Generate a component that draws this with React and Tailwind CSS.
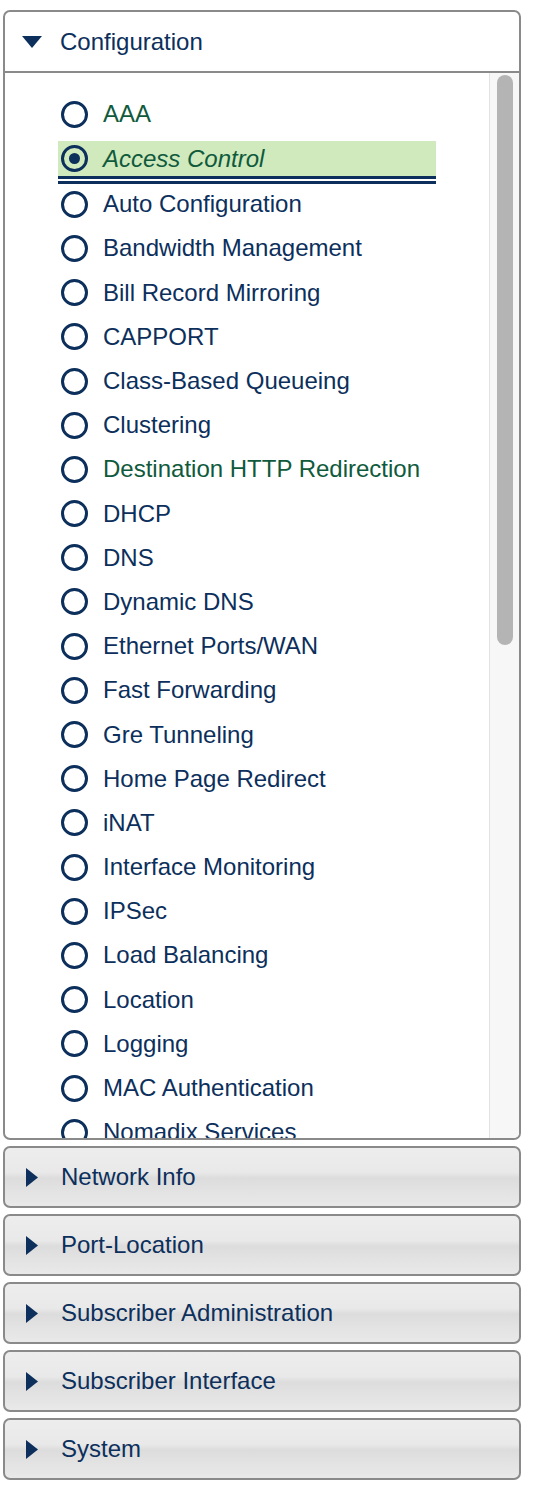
import { useState } from "react";

const configItems = [
  { label: "AAA", visited: true },
  { label: "Access Control" },
  { label: "Auto Configuration" },
  { label: "Bandwidth Management" },
  { label: "Bill Record Mirroring" },
  { label: "CAPPORT" },
  { label: "Class-Based Queueing" },
  { label: "Clustering" },
  { label: "Destination HTTP Redirection", visited: true },
  { label: "DHCP" },
  { label: "DNS" },
  { label: "Dynamic DNS" },
  { label: "Ethernet Ports/WAN" },
  { label: "Fast Forwarding" },
  { label: "Gre Tunneling" },
  { label: "Home Page Redirect" },
  { label: "iNAT" },
  { label: "Interface Monitoring" },
  { label: "IPSec" },
  { label: "Load Balancing" },
  { label: "Location" },
  { label: "Logging" },
  { label: "MAC Authentication" },
  { label: "Nomadix Services" }
];

const sections = [
  "Network Info",
  "Port-Location",
  "Subscriber Administration",
  "Subscriber Interface",
  "System"
];

const Radio = ({ checked }) => (
  <span className="flex-shrink-0 w-[27px] h-[27px] rounded-full border-[3px] border-[#0c2f5c] flex items-center justify-center">
    {checked && <span className="w-[11px] h-[11px] rounded-full bg-[#0c2f5c]"></span>}
  </span>
);

const ArrowDown = () => (
  <svg width="20" height="12" viewBox="0 0 20 12" className="flex-shrink-0">
    <polygon points="0,0 20,0 10,12" fill="#0c2f5c" />
  </svg>
);

const ArrowRight = () => (
  <svg width="12" height="19" viewBox="0 0 12 19" className="flex-shrink-0">
    <polygon points="0,0 12,9.5 0,19" fill="#0c2f5c" />
  </svg>
);

const App = () => {
  const [active, setActive] = useState("Access Control");

  return (
    <div className="w-[536px] min-h-[1496px] bg-white pl-[3px] pt-[10px] font-['Liberation_Sans',Arial,sans-serif] text-[24px] text-[#0c2f5c]">
      <div className="w-[518px] flex flex-col gap-[6px]">
        {/* ===== Configuration (open) ===== */}
        <div className="h-[1130px] flex flex-col border-2 border-[#8a8a8a] rounded-[7px] overflow-hidden bg-white">
          <div className="h-[61px] flex-shrink-0 flex items-center pl-[17px] gap-[18px] border-b-2 border-[#8a8a8a]">
            <ArrowDown />
            <span className="leading-none">Configuration</span>
          </div>

          <div className="flex flex-1 min-h-0">
            <div className="flex-1 overflow-hidden pt-[19px] pl-[53px]">
              {configItems.map((item) =>
                item.label === active ? (
                  <div
                    key={item.label}
                    className="w-[378px] mt-[5px] mb-[-2px] border-b-[8px] border-double border-[#0c2f5c]"
                  >
                    <div className="h-[35px] bg-[#d0e9bd] flex items-center gap-[15px] pl-[3px]">
                      <Radio checked />
                      <span className="italic text-[#0f5a3c] leading-none">{item.label}</span>
                    </div>
                  </div>
                ) : (
                  <div
                    key={item.label}
                    onClick={() => setActive(item.label)}
                    className="h-[44.2px] flex items-center gap-[15px] pl-[3px] cursor-pointer"
                  >
                    <Radio />
                    <span className={`leading-none whitespace-nowrap ${item.visited ? "text-[#0f5a3c]" : "text-[#0c2f5c]"}`}>
                      {item.label}
                    </span>
                  </div>
                )
              )}
            </div>

            {/* scrollbar */}
            <div className="w-[30px] flex-shrink-0 border-l border-[#e2e2e2] bg-[#f7f7f7] pt-[2px] pl-[7px] pr-[6px]">
              <div className="h-[570px] rounded-full bg-[#b4b4b4]"></div>
            </div>
          </div>
        </div>

        {/* ===== Collapsed sections ===== */}
        {sections.map((name) => (
          <div
            key={name}
            className="h-[62px] flex items-center pl-[21px] gap-[23px] border-2 border-[#8a8a8a] rounded-[7px] bg-[linear-gradient(to_bottom,#ededed_0%,#e9e9e9_42%,#dcdcdc_52%,#e2e2e2_72%,#e9e9e9_100%)]"
          >
            <ArrowRight />
            <span className="leading-none">{name}</span>
          </div>
        ))}
      </div>
    </div>
  );
};

export default App;
